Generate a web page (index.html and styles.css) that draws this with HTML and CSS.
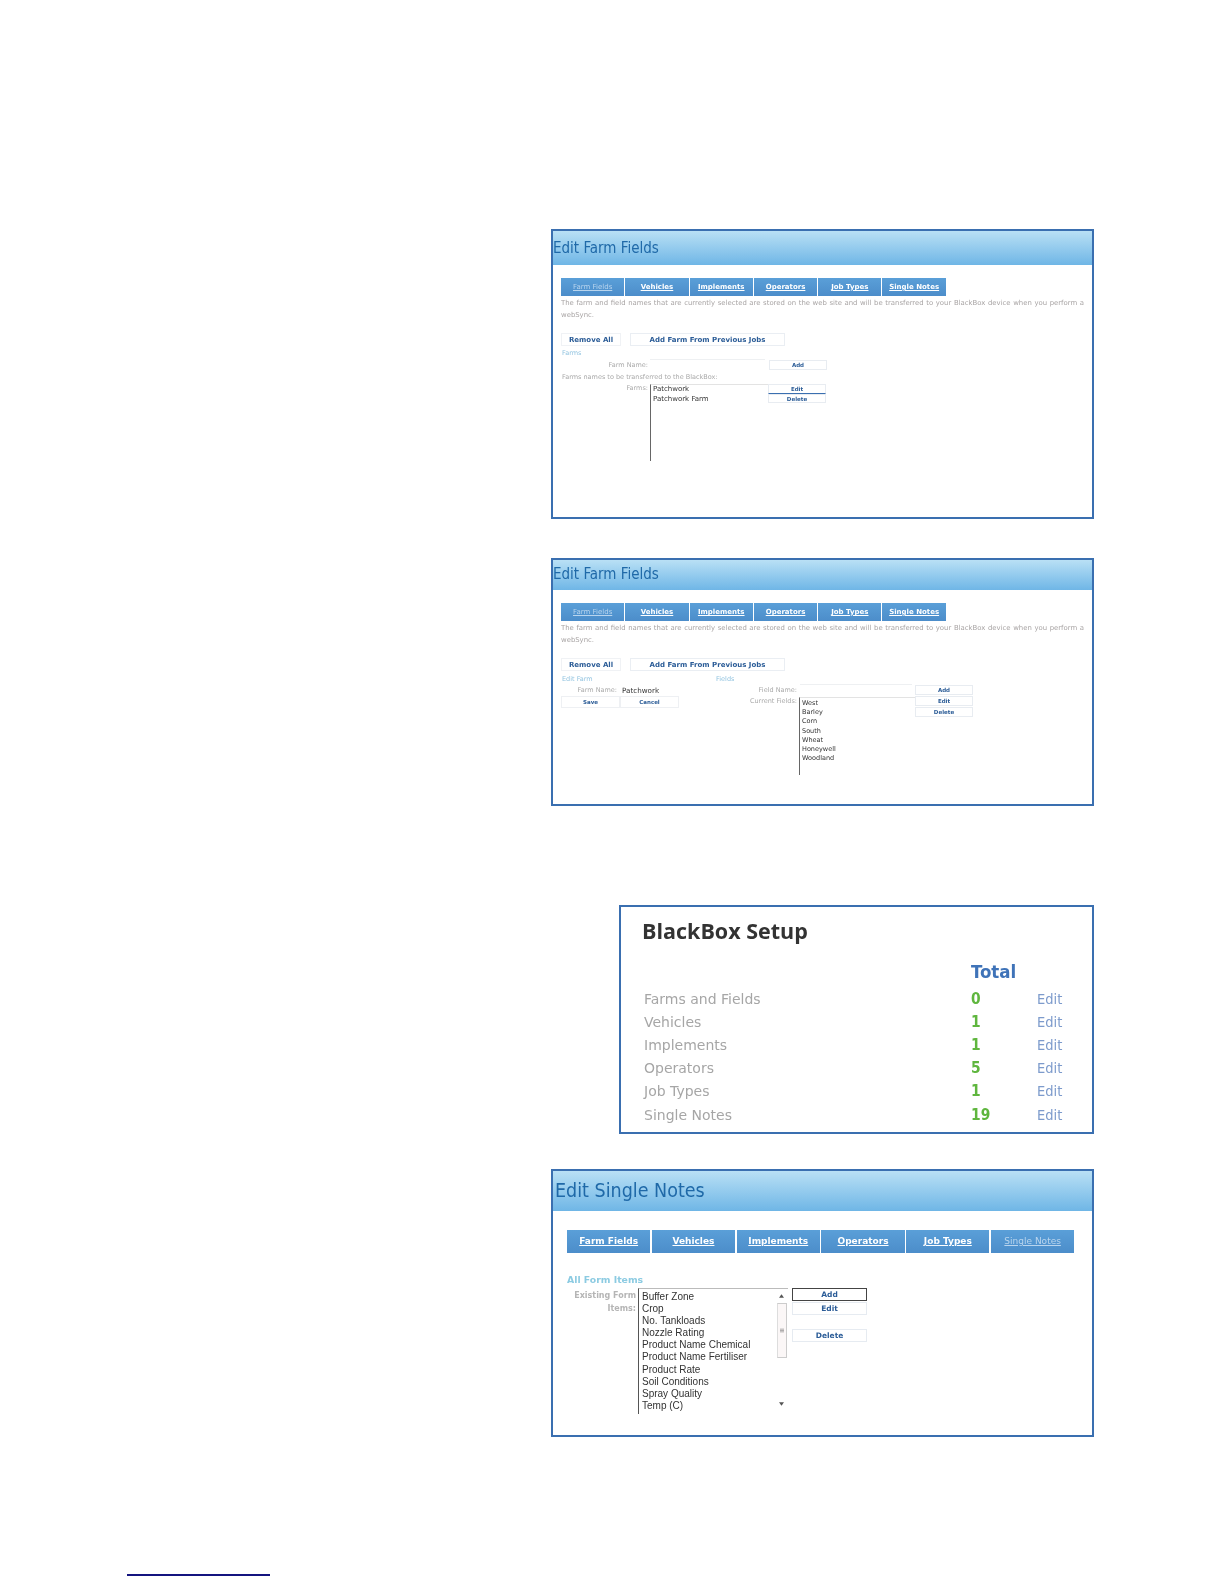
FILE: index.html
```html
<!DOCTYPE html>
<html lang="en">
<head>
<meta charset="utf-8">
<title>BlackBox Setup</title>
<link rel="stylesheet" href="styles.css">
</head>
<body>
<main class="page">
  <div class="figures">
    <section class="panel p1">
      <div class="soft">
      <h2 class="banner">Edit Farm Fields</h2>
      <nav class="tabs">
        <a class="tab dim">Farm Fields</a><a class="tab">Vehicles</a><a class="tab">Implements</a><a class="tab">Operators</a><a class="tab">Job Types</a><a class="tab">Single Notes</a>
      </nav>
      <p class="intro">The farm and field names that are currently selected are stored on the web site and will be transferred to your BlackBox device when you perform a webSync.</p>
      <div class="actions">
        <span class="btn remove">Remove All</span><span class="btn prev">Add Farm From Previous Jobs</span>
      </div>
      <div class="sect">Farms</div>
      <div class="frow"><span class="lab w1">Farm Name:</span><span class="input i1"></span><span class="btn small">Add</span></div>
      <div class="cap">Farms names to be transferred to the BlackBox:</div>
      <div class="listrow">
        <span class="lab w1">Farms:</span>
        <div class="list l1"><div>Patchwork</div><div>Patchwork Farm</div></div>
        <div class="stack"><span class="btn small ul">Edit</span><span class="btn small">Delete</span></div>
      </div>
      </div>
    </section>

    <section class="panel p2">
      <div class="soft">
      <h2 class="banner">Edit Farm Fields</h2>
      <nav class="tabs">
        <a class="tab dim">Farm Fields</a><a class="tab">Vehicles</a><a class="tab">Implements</a><a class="tab">Operators</a><a class="tab">Job Types</a><a class="tab">Single Notes</a>
      </nav>
      <p class="intro">The farm and field names that are currently selected are stored on the web site and will be transferred to your BlackBox device when you perform a webSync.</p>
      <div class="actions">
        <span class="btn remove">Remove All</span><span class="btn prev">Add Farm From Previous Jobs</span>
      </div>
      <div class="cols">
        <div class="col-a">
          <div class="sect">Edit Farm</div>
          <div class="frow"><span class="lab w2">Farm Name:</span><span class="val">Patchwork</span></div>
          <div class="saverow"><span class="btn save">Save</span><span class="btn save">Cancel</span></div>
        </div>
        <div class="col-b">
          <div class="sect">Fields</div>
          <div class="frow"><span class="lab w3">Field Name:</span><span class="input i2"></span><span class="btn small">Add</span></div>
          <div class="listrow tight">
            <span class="lab w3">Current Fields:</span>
            <div class="list l2"><div>West</div><div>Barley</div><div>Corn</div><div>South</div><div>Wheat</div><div>Honeywell</div><div>Woodland</div></div>
            <div class="stack gapped"><span class="btn small">Edit</span><span class="btn small">Delete</span></div>
          </div>
        </div>
      </div>
      </div>
    </section>

    <section class="panel p3">
      <div class="soft">
      <h2 class="setup">BlackBox Setup</h2>
      <div class="grid">
        <span class="total">Total</span>
        <span class="rowname">Farms and Fields</span><span class="num">0</span><a class="edit">Edit</a>
        <span class="rowname">Vehicles</span><span class="num">1</span><a class="edit">Edit</a>
        <span class="rowname">Implements</span><span class="num">1</span><a class="edit">Edit</a>
        <span class="rowname">Operators</span><span class="num">5</span><a class="edit">Edit</a>
        <span class="rowname">Job Types</span><span class="num">1</span><a class="edit">Edit</a>
        <span class="rowname">Single Notes</span><span class="num">19</span><a class="edit">Edit</a>
      </div>
      </div>
    </section>

    <section class="panel p4">
      <div class="soft">
      <h2 class="banner big">Edit Single Notes</h2>
      <nav class="tabs wide">
        <a class="tab">Farm Fields</a><a class="tab">Vehicles</a><a class="tab">Implements</a><a class="tab">Operators</a><a class="tab">Job Types</a><a class="tab dim">Single Notes</a>
      </nav>
      <div class="allitems">All Form Items</div>
      <div class="noterow">
        <span class="notelab">Existing Form Items:</span>
        <div class="notelist">
          <div class="noteitems"><div>Buffer Zone</div><div>Crop</div><div>No. Tankloads</div><div>Nozzle Rating</div><div>Product Name Chemical</div><div>Product Name Fertiliser</div><div>Product Rate</div><div>Soil Conditions</div><div>Spray Quality</div><div>Temp (C)</div></div>
          <div class="scroll">
            <svg class="arrow" viewBox="0 0 6 4" aria-hidden="true"><path d="M0 4 L3 0 L6 4 Z"/></svg>
            <div class="thumb"><svg class="grip" viewBox="0 0 6 6" aria-hidden="true"><path d="M0 1H6M0 3H6M0 5H6"/></svg></div>
            <svg class="arrow down" viewBox="0 0 6 4" aria-hidden="true"><path d="M0 0 L3 4 L6 0 Z"/></svg>
          </div>
        </div>
        <div class="notebtns"><span class="btn nb focus">Add</span><span class="btn nb">Edit</span><span class="btn nb del">Delete</span></div>
      </div>
      </div>
    </section>
  </div>
  <div class="footrule"></div>
</main>
</body>
</html>
```
FILE: styles.css
```css
* { box-sizing: border-box; }
html, body { margin: 0; padding: 0; background: #fff; }
.page { width: 1224px; height: 1584px; display: flex; flex-direction: column; font-family: "DejaVu Sans", sans-serif; }
.figures { display: flex; flex-direction: column; align-items: flex-end; padding: 229px 130px 0 0; height: 1574px; }
.footrule { width: 143px; height: 1.5px; background: #14147f; margin-left: 127px; }

.panel { border: 2px solid #3a6fb0; background: #fff; overflow: hidden; }
.soft { filter: blur(0.55px); height: 100%; }
.p1 { width: 543px; height: 290px; }
.p2 { width: 543px; height: 248px; margin-top: 39px; }
.p3 { width: 475px; height: 229px; margin-top: 99px; }
.p4 { width: 543px; height: 268px; margin-top: 35px; }

.banner { margin: 0; height: 34px; padding-left: 0; line-height: 34px; font-size: 15px; font-weight: 400; font-family: "DejaVu Sans Condensed", "DejaVu Sans", sans-serif; color: #1f69a8; background: linear-gradient(#b9e0f5, #6fb6e6); }
.p2 .banner { height: 30px; line-height: 28px; }
.banner.big { height: 40px; line-height: 39px; font-size: 19.5px; padding-left: 2px; }

.tabs { display: flex; gap: 1px; margin: 13px 0 0 8px; }
.tab { width: 63.3px; height: 18px; line-height: 18px; text-align: center; font-size: 7px; font-weight: 700; color: #fff; text-decoration: underline; background: linear-gradient(#5a9fd8, #4c8dca); }
.tab.dim { color: #b9d5ee; font-weight: 400; }
.tabs.wide { margin: 19px 0 0 14px; gap: 1.5px; }
.tabs.wide .tab { width: 83.3px; height: 23px; line-height: 23px; font-size: 9px; }

.intro { margin: 0 0 0 8px; width: 523px; padding-top: 1px; font-size: 6.9px; line-height: 12px; color: #a8a4a4; text-align: justify; }

.actions { display: flex; gap: 9px; margin: 12px 0 0 8px; }
.btn { display: block; text-align: center; font-weight: 700; color: #2b5c97; background: #fff; }
.remove { width: 60px; height: 13px; line-height: 13px; font-size: 7px; border: 1px solid #f0f2f5; }
.prev { width: 155px; height: 13px; line-height: 13px; font-size: 7px; border: 1px solid #eaeef3; }

.sect { margin: 2px 0 0 9px; font-size: 6.5px; line-height: 10px; color: #93c4e0; }
.cols .sect { margin-top: 3px; }
.frow { display: flex; align-items: center; height: 14px; margin-top: 0; }
.cols .frow { margin-top: -1px; }
.lab { font-size: 6.5px; color: #aaa; text-align: right; flex: none; }
.w1 { width: 95px; }
.w2 { width: 64px; }
.w3 { width: 91px; }
.input { display: block; flex: none; height: 12px; border-top: 1px solid #eef0f2; }
.i1 { width: 115px; margin: 0 4px 0 2px; }
.i2 { width: 112px; margin: 0 3px 0 3px; }
.small { width: 58px; height: 9.5px; line-height: 8.5px; font-size: 5.5px; border: 1px solid #e8ecf1; flex: none; }
.ul { border-bottom: 1px solid #3a6fb0; }
.cap { margin: 0 0 0 9px; font-size: 6.5px; line-height: 11px; color: #a9a9a9; }

.listrow { display: flex; align-items: flex-start; margin-top: 1px; }
.list { flex: none; font-family: "DejaVu Sans", sans-serif; font-size: 7px; color: #333; border-left: 1.2px solid #666; border-top: 1px solid #e3e3e3; padding: 0 0 0 2px; }
.l1 { width: 118px; height: 77px; margin-left: 2px; line-height: 9.5px; }
.l2 { width: 116px; height: 78px; margin-left: 2px; line-height: 9.2px; font-size: 6.5px; padding-top: 1px; }
.stack { display: flex; flex-direction: column; }
.gapped { gap: 1.5px; margin-top: -1px; }

.cols { display: flex; }
.col-a { width: 153px; }
.col-b { flex: none; }
.col-b .sect { margin-left: 10px; }
.val { margin-left: 5px; font-size: 7.2px; color: #333; }
.saverow { display: flex; margin: -1px 0 0 8px; }
.save { width: 59px; height: 12px; line-height: 11px; font-size: 5.5px; border: 1px solid #eef0f3; }
.tight { margin-top: 0; }

.setup { margin: 0; padding: 10px 0 0 21px; font-size: 21.5px; line-height: 28px; font-weight: 700; color: #333; font-family: "Open Sans", sans-serif; }
.grid { display: grid; grid-template-columns: 327px 66px auto; grid-template-rows: 27px; grid-auto-rows: 23.2px; align-items: center; margin: 15px 0 0 23px; font-size: 14px; }
.total { grid-column: 2 / 4; align-self: start; line-height: 24px; font-size: 18.5px; font-weight: 700; color: #3f73b8; font-family: "DejaVu Sans Condensed", sans-serif; }
.rowname { color: #a6a6a6; font-family: "DejaVu Sans", sans-serif; }
.num { font-size: 15.4px; color: #5fb63e; font-weight: 700; font-family: "DejaVu Sans Condensed", sans-serif; }
.edit { font-size: 14.5px; color: #7d9bcc; font-family: "DejaVu Sans Condensed", sans-serif; }

.allitems { margin: 21px 0 0 14px; font-size: 9.3px; line-height: 12px; font-weight: 700; color: #8ccbe2; }
.noterow { display: flex; align-items: flex-start; margin-top: 2px; }
.notelab { width: 83px; padding-top: 1px; font-size: 8px; line-height: 13px; font-weight: 700; color: #b5b5b5; text-align: right; }
.notelist { display: flex; width: 150px; height: 126px; margin-left: 2px; border-left: 1.2px solid #555; border-top: 1px solid #bbb; }
.noteitems { flex: 1; padding: 2px 0 0 3px; font-family: "Liberation Sans", sans-serif; font-size: 10px; line-height: 12.1px; color: #333; }
.scroll { width: 11px; margin-right: 1px; display: flex; flex-direction: column; align-items: center; padding-top: 5px; }
.arrow { width: 5px; height: 4px; fill: #555; flex: none; }
.thumb { width: 10px; height: 55px; margin-top: 5px; border: 1px solid #ccc; border-left-color: #ddd; display: flex; align-items: center; justify-content: center; background: #fbf7f7; }
.grip { width: 4px; height: 5px; stroke: #888; stroke-width: 1; }
.down { margin-top: 44px; }
.notebtns { display: flex; flex-direction: column; margin-left: 4px; padding-top: 0; }
.nb { width: 75px; height: 13px; line-height: 11px; font-size: 7.5px; border: 1px solid #e6ebf1; }
.focus { border: 1px solid #444; margin-bottom: 1px; }
.del { margin-top: 14px; }
```
